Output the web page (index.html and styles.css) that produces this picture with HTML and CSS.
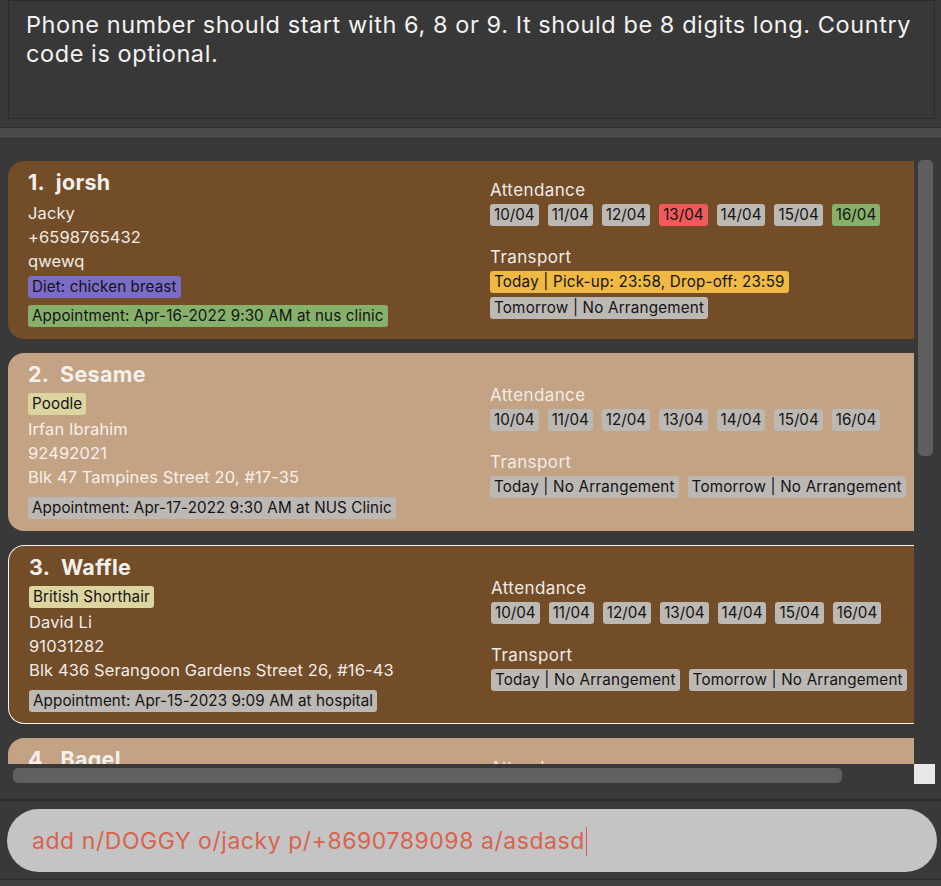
FILE: index.html
```html
<!DOCTYPE html>
<html lang="en">
<head>
<meta charset="utf-8">
<title>Pet list</title>
<link rel="stylesheet" href="styles.css">
</head>
<body>
<div class="app">
  <div class="result">Phone number should start with 6, 8 or 9. It should be 8 digits long. Country code is optional.</div>
  <div class="splitter"></div>
  <div class="list-area">
    <div class="list-clip">
      <div class="card card-dark">
        <div class="col-left">
          <div class="title">1.&nbsp; jorsh</div>
          <div class="line line-owner">Jacky</div>
          <div class="line">+6598765432</div>
          <div class="line">qwewq</div>
          <div class="tags"><span class="tag tag-diet">Diet: chicken breast</span></div>
          <div class="appt"><span class="tag tag-green">Appointment: Apr-16-2022 9:30 AM at nus clinic</span></div>
        </div>
        <div class="col-right">
          <div class="label">Attendance</div>
          <div class="chips">
            <span class="chip">10/04</span><span class="chip">11/04</span><span class="chip">12/04</span><span class="chip chip-red">13/04</span><span class="chip">14/04</span><span class="chip">15/04</span><span class="chip chip-green">16/04</span>
          </div>
          <div class="label label-transport">Transport</div>
          <div class="chips chips-transport">
            <span class="chip chip-yellow">Today | Pick-up: 23:58, Drop-off: 23:59</span><span class="chip">Tomorrow | No Arrangement</span>
          </div>
        </div>
      </div>

      <div class="card card-light">
        <div class="col-left">
          <div class="title">2.&nbsp; Sesame</div>
          <div class="tags"><span class="tag tag-breed">Poodle</span></div>
          <div class="line">Irfan Ibrahim</div>
          <div class="line">92492021</div>
          <div class="line">Blk 47 Tampines Street 20, #17-35</div>
          <div class="appt"><span class="tag">Appointment: Apr-17-2022 9:30 AM at NUS Clinic</span></div>
        </div>
        <div class="col-right">
          <div class="label">Attendance</div>
          <div class="chips">
            <span class="chip">10/04</span><span class="chip">11/04</span><span class="chip">12/04</span><span class="chip">13/04</span><span class="chip">14/04</span><span class="chip">15/04</span><span class="chip">16/04</span>
          </div>
          <div class="label label-transport">Transport</div>
          <div class="chips chips-transport">
            <span class="chip">Today | No Arrangement</span><span class="chip">Tomorrow | No Arrangement</span>
          </div>
        </div>
      </div>

      <div class="card card-dark card-selected">
        <div class="col-left">
          <div class="title">3.&nbsp; Waffle</div>
          <div class="tags"><span class="tag tag-breed">British Shorthair</span></div>
          <div class="line">David Li</div>
          <div class="line">91031282</div>
          <div class="line">Blk 436 Serangoon Gardens Street 26, #16-43</div>
          <div class="appt"><span class="tag">Appointment: Apr-15-2023 9:09 AM at hospital</span></div>
        </div>
        <div class="col-right">
          <div class="label">Attendance</div>
          <div class="chips">
            <span class="chip">10/04</span><span class="chip">11/04</span><span class="chip">12/04</span><span class="chip">13/04</span><span class="chip">14/04</span><span class="chip">15/04</span><span class="chip">16/04</span>
          </div>
          <div class="label label-transport">Transport</div>
          <div class="chips chips-transport">
            <span class="chip">Today | No Arrangement</span><span class="chip">Tomorrow | No Arrangement</span>
          </div>
        </div>
      </div>

      <div class="card card-light">
        <div class="col-left">
          <div class="title">4.&nbsp; Bagel</div>
        </div>
        <div class="col-right col-right-top">
          <div class="label">Attendance</div>
        </div>
      </div>
    </div>
    <div class="vscroll"><div class="vthumb"></div></div>
  </div>
  <div class="hbar">
    <div class="htrack"><div class="hthumb"></div></div>
    <div class="corner"></div>
  </div>
  <div class="command-wrap">
    <div class="command">add n/DOGGY o/jacky p/+8690789098 a/asdasd<span class="caret"></span></div>
  </div>
  <div class="footer"></div>
</div>
</body>
</html>
```

FILE: styles.css
```css
* { box-sizing: border-box; }

html, body {
  margin: 0;
  padding: 0;
  background: #393939;
  height: 886px;
  overflow: hidden;
}

body {
  font-family: Inter, "Open Sans", "DejaVu Sans", sans-serif;
  color: #f0ece8;
}

.app {
  display: flex;
  flex-direction: column;
  width: 941px;
  height: 886px;
}

.result {
  height: 119px;
  margin: 0 6px 0 8px;
  border: 1px solid #2b2b2b;
  background: #383838;
  padding: 9px 16px 9px 17px;
  font-size: 23.5px;
  letter-spacing: 0.58px;
  line-height: 29px;
  color: #f2f2f2;
}

.splitter {
  height: 12px;
  margin-top: 8px;
  background: #4a4a4a;
  border-top: 1px solid #2f2f2f;
  border-bottom: 1px solid #2f2f2f;
}

.list-area {
  height: 625px;
  display: flex;
  padding-left: 8px;
  overflow: hidden;
}

.list-clip {
  width: 906px;
  height: 625px;
  overflow: hidden;
  padding-top: 22px;
  display: flex;
  flex-direction: column;
  gap: 14px;
}

.vscroll {
  width: 15px;
  margin-left: 4px;
  padding-top: 21px;
}

.vthumb {
  height: 296px;
  background: #5e5e5e;
  border-radius: 5px;
}

.card {
  flex: none;
  width: 975px;
  height: 178px;
  border-radius: 16px 0 0 16px;
  display: flex;
  padding: 0 0 12px 20px;
}

.card-dark { background: #734d27; }
.card-light { background: #c4a284; }

.card-selected {
  border: 1px solid #f2f2f2;
  border-right: none;
  height: 179px;
  padding: 0 0 11px 20px;
}

.col-left {
  width: 462px;
  flex: none;
  display: flex;
  flex-direction: column;
  padding-top: 7px;
}

.title {
  font-size: 21.5px;
  letter-spacing: 0.3px;
  font-weight: 700;
  line-height: 28px;
  height: 30px;
  color: #f4f0ec;
}

.line {
  font-size: 16.5px;
  letter-spacing: 0.1px;
  line-height: 24px;
  height: 24px;
  white-space: nowrap;
}

.line-owner { margin-top: 3px; }

.card-light .line { color: #f6f1ea; }

.tags {
  display: flex;
  margin: 3px 0 2px;
}

.tag {
  display: inline-block;
  height: 22px;
  line-height: 22px;
  padding: 0 4px;
  border-radius: 3px;
  font-size: 15.2px;
  letter-spacing: 0.1px;
  color: #141414;
  background: #bcb8b3;
  white-space: nowrap;
}

.tag-diet { background: #7c6bc9; }
.tag-green { background: #87b16a; }
.tag-breed { background: #ddd5a0; }

.appt {
  margin-top: auto;
  display: flex;
}

.col-right {
  width: 470px;
  flex: none;
  display: flex;
  flex-direction: column;
  justify-content: center;
  padding-top: 10px;
}

.col-right-top {
  justify-content: flex-start;
  padding-top: 20px;
}

.label {
  font-size: 17px;
  letter-spacing: 0.4px;
  line-height: 20px;
  height: 20px;
  margin-bottom: 4px;
  white-space: nowrap;
}

.label-transport { margin-top: 21px; }

.chips {
  display: flex;
  flex-wrap: wrap;
  gap: 4px 9px;
}

.chip {
  display: inline-block;
  height: 22px;
  line-height: 22px;
  padding: 0 4px;
  border-radius: 3px;
  font-size: 15.2px;
  letter-spacing: 0;
  color: #141414;
  background: #bcb8b3;
  white-space: nowrap;
}

.chips-transport .chip { letter-spacing: 0.2px; }

.chip-red { background: #f05a5a; }
.chip-green { background: #87b16a; }
.chip-yellow { background: #f0b943; }

.hbar {
  height: 20px;
  display: flex;
  justify-content: space-between;
}

.htrack {
  width: 906px;
  padding: 4px 0 0 13px;
}

.hthumb {
  width: 829px;
  height: 15px;
  background: #606060;
  border-radius: 5px;
}

.corner {
  width: 21px;
  height: 20px;
  margin-right: 6px;
  background: #e8e8e8;
}

.command-wrap {
  margin-top: 15px;
  border-top: 2px solid #2a2a2a;
  padding: 8px 4px 7px 7px;
  border-bottom: 1px solid #2b2b2b;
}

.command {
  height: 63px;
  border-radius: 32px;
  background: #c4c4c4;
  padding-left: 25px;
  display: flex;
  align-items: center;
  font-size: 23px;
  letter-spacing: 0.55px;
  color: #d8634d;
  padding-top: 1px;
  white-space: nowrap;
}

.caret {
  display: inline-block;
  width: 1px;
  height: 29px;
  background: #d8634d;
  margin-left: 1px;
}

.footer {
  flex: 1;
  background: #404040;
}
```
